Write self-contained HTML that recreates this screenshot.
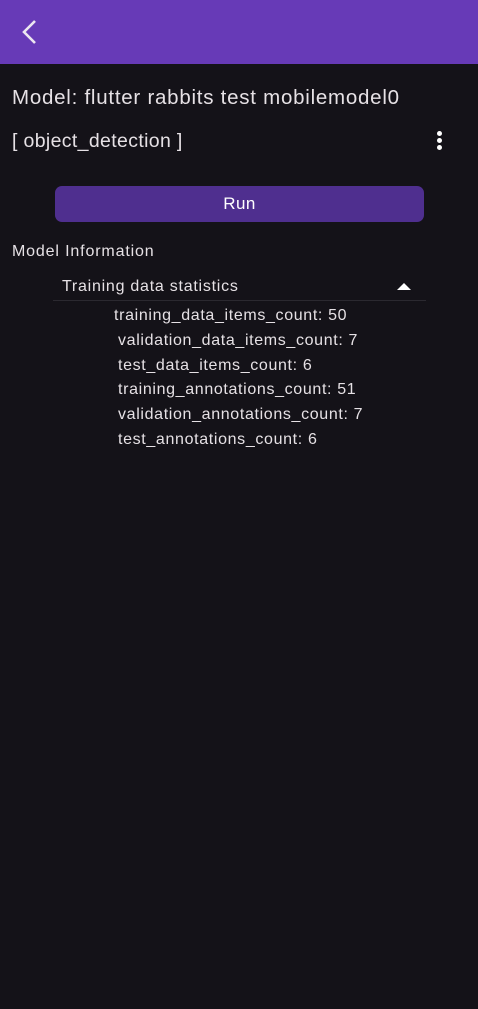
<!DOCTYPE html>
<html><head><meta charset="utf-8"><style>
*{margin:0;padding:0;box-sizing:border-box}
body{width:478px;height:1009px;background:#141218;color:#e6e1e5;font-family:"Liberation Sans",sans-serif;position:relative;overflow:hidden}
.bar{position:absolute;left:0;top:0;width:478px;height:64px;background:#673ab7}
.t{position:absolute;white-space:nowrap}
.btn{position:absolute;left:55px;top:186px;width:369px;height:36px;background:#4f2f8f;border-radius:7px;color:#fff;font-size:17px;text-align:center;line-height:36px;letter-spacing:0.4px}
.dot{position:absolute;left:437px;width:5px;height:5px;border-radius:50%;background:#fff}
.it{position:absolute;left:118px;font-size:16px;white-space:nowrap;letter-spacing:0.65px}
</style></head><body>
<div class="bar"><svg width="64" height="64" style="position:absolute;left:0;top:0"><path d="M35 21 L24 32 L35 43" stroke="#ece6f0" stroke-width="2.6" fill="none"/></svg></div>
<div class="t" style="left:12px;top:86px;font-size:20.5px;letter-spacing:0.75px">Model: flutter rabbits test mobilemodel0</div>
<div class="t" style="left:12px;top:130px;font-size:19.5px;letter-spacing:0.35px">[ object_detection ]</div>
<div class="dot" style="top:131px"></div><div class="dot" style="top:138px"></div><div class="dot" style="top:145px"></div>
<div class="btn">Run</div>
<div class="t" style="left:12px;top:243px;font-size:16px;letter-spacing:0.85px">Model Information</div>
<div class="t" style="left:62px;top:278px;font-size:16px;letter-spacing:0.75px">Training data statistics</div>
<svg width="14" height="8" style="position:absolute;left:397px;top:283px"><path d="M0 7 L7 0 L14 7Z" fill="#fff"/></svg>
<div style="position:absolute;left:53px;top:300px;width:373px;height:1px;background:#2b2930"></div>
<div class="it" style="left:114px;top:307px">training_data_items_count: 50</div>
<div class="it" style="top:332px">validation_data_items_count: 7</div>
<div class="it" style="top:357px">test_data_items_count: 6</div>
<div class="it" style="top:381px">training_annotations_count: 51</div>
<div class="it" style="top:406px">validation_annotations_count: 7</div>
<div class="it" style="top:431px">test_annotations_count: 6</div>
</body></html>
